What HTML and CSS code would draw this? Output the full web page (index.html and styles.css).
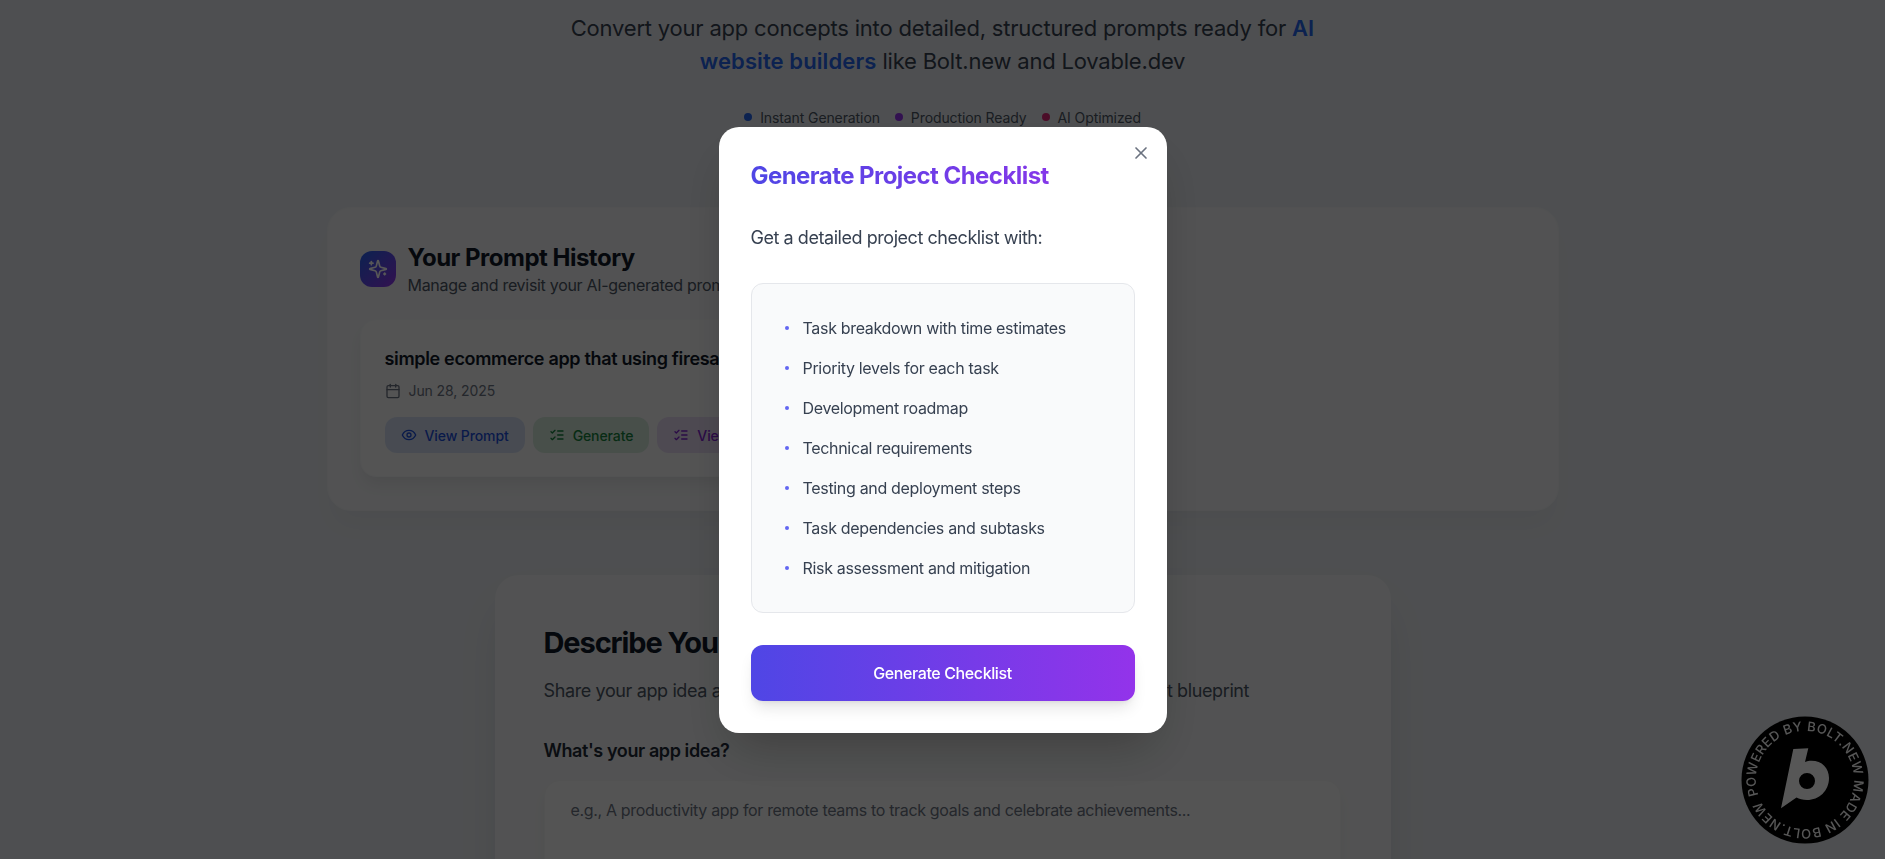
FILE: index.html
```html
<!DOCTYPE html>
<html lang="en">
<head>
<meta charset="utf-8">
<title>Generate Project Checklist</title>
<link rel="stylesheet" href="styles.css">
</head>
<body>
<main class="page">
  <p class="lead">Convert your app concepts into detailed, structured prompts ready for <strong>AI website builders</strong> like Bolt.new and Lovable.dev</p>
  <ul class="features">
    <li class="feature"><span class="dot dot-blue"></span>Instant Generation</li>
    <li class="feature"><span class="dot dot-purple"></span>Production Ready</li>
    <li class="feature"><span class="dot dot-pink"></span>AI Optimized</li>
  </ul>

  <section class="history">
    <header class="history-head">
      <span class="history-icon">
        <svg class="icon-20 mirrored" viewBox="0 0 24 24"><path d="M9.937 15.5A2 2 0 0 0 8.5 14.063l-6.135-1.582a.5.5 0 0 1 0-.962L8.5 9.936A2 2 0 0 0 9.937 8.5l1.582-6.135a.5.5 0 0 1 .963 0L14.063 8.5A2 2 0 0 0 15.5 9.937l6.135 1.581a.5.5 0 0 1 0 .964L15.5 14.063a2 2 0 0 0-1.437 1.437l-1.582 6.135a.5.5 0 0 1-.963 0z"/><path d="M20 3v4"/><path d="M22 5h-4"/><path d="M4 17v2"/><path d="M5 18H3"/></svg>
      </span>
      <div class="history-text">
        <h2 class="history-title">Your Prompt History</h2>
        <p class="history-sub">Manage and revisit your AI-generated prompts</p>
      </div>
    </header>
    <article class="item">
      <h3 class="item-title">simple ecommerce app that using firesa...</h3>
      <p class="item-date">
        <svg class="icon-16" viewBox="0 0 24 24"><path d="M8 2v4"/><path d="M16 2v4"/><rect x="3" y="4" width="18" height="18" rx="2"/><path d="M3 10h18"/></svg>
        Jun 28, 2025
      </p>
      <div class="item-actions">
        <button class="pill pill-blue"><svg class="icon-16" viewBox="0 0 24 24"><path d="M2 12s3-7 10-7 10 7 10 7-3 7-10 7-10-7-10-7Z"/><circle cx="12" cy="12" r="3"/></svg>View Prompt</button>
        <button class="pill pill-green"><svg class="icon-16" viewBox="0 0 24 24"><path d="m3 17 2 2 4-4"/><path d="m3 7 2 2 4-4"/><path d="M13 6h8"/><path d="M13 12h8"/><path d="M13 18h8"/></svg>Generate</button>
        <button class="pill pill-purple"><svg class="icon-16" viewBox="0 0 24 24"><path d="m3 17 2 2 4-4"/><path d="m3 7 2 2 4-4"/><path d="M13 6h8"/><path d="M13 12h8"/><path d="M13 18h8"/></svg>View</button>
      </div>
    </article>
  </section>

  <section class="describe">
    <h2 class="describe-title">Describe Your App Idea</h2>
    <p class="describe-sub">Share your app idea and we'll transform it into a comprehensive development blueprint</p>
    <label class="describe-label" for="idea">What's your app idea?</label>
    <textarea class="describe-input" id="idea" placeholder="e.g., A productivity app for remote teams to track goals and celebrate achievements..."></textarea>
  </section>
</main>

<a class="bolt" href="#" aria-label="Made in Bolt.new">
  <svg class="bolt-svg" viewBox="0 0 128 128">
    <circle cx="64" cy="64" r="63.5" class="bolt-disc"/>
    <path id="bolt-ring" class="bolt-ring" d="M17.3 79.2A49 49 0 1 1 110.7 48.8A49 49 0 1 1 17.3 79.2"/>
    <text class="bolt-text"><textPath href="#bolt-ring" textLength="302" lengthAdjust="spacing">POWERED BY BOLT.NEW MADE IN BOLT.NEW</textPath></text>
    <path class="bolt-b" fill-rule="evenodd" d="M52.3 33L67.3 32.3L64 46C66 45 68 44.7 70.5 44.7C81 44.7 88 52 88 62C88 75 78 84 66 84C62 84 58 83 55.5 81.5L40 92.3ZM66 57A8 8 0 1 0 66 73A8 8 0 1 0 66 57Z"/>
  </svg>
</a>

<div class="overlay">
  <div class="modal" role="dialog">
    <button class="close" aria-label="Close">
      <svg class="icon-20" viewBox="0 0 24 24"><path d="M18 6 6 18"/><path d="m6 6 12 12"/></svg>
    </button>
    <h2 class="modal-title"><span class="modal-title-text">Generate Project Checklist</span></h2>
    <p class="modal-intro">Get a detailed project checklist with:</p>
    <ul class="modal-list">
      <li class="modal-row">Task breakdown with time estimates</li>
      <li class="modal-row">Priority levels for each task</li>
      <li class="modal-row">Development roadmap</li>
      <li class="modal-row">Technical requirements</li>
      <li class="modal-row">Testing and deployment steps</li>
      <li class="modal-row">Task dependencies and subtasks</li>
      <li class="modal-row">Risk assessment and mitigation</li>
    </ul>
    <button class="modal-cta">Generate Checklist</button>
  </div>
</div>
</body>
</html>
```
FILE: styles.css
```css
* { box-sizing: border-box; }
html, body { margin: 0; height: 859px; overflow: hidden; }
body {
  font-family: Inter, "Liberation Sans", sans-serif;
  background: #e5e8ec;
  color: #111827;
}
h2, h3, p, ul { margin: 0; padding: 0; }
ul { list-style: none; }
button { font-family: inherit; border: 0; cursor: pointer; }

svg { fill: none; stroke: currentColor; stroke-width: 2; stroke-linecap: round; stroke-linejoin: round; flex: none; }
.icon-16 { width: 16px; height: 16px; }
.icon-20 { width: 20px; height: 20px; }
.mirrored { transform: scaleX(-1); }

.page { display: flex; flex-direction: column; align-items: center; padding-top: 12px; }

.lead { width: 768px; text-align: center; font-size: 22px; line-height: 32.5px; font-weight: 400; letter-spacing: -.2px; color: #374151; }
.lead strong { font-weight: 600; letter-spacing: .1px; color: #2563eb; }

.features { display: flex; gap: 15px; margin-top: 29px; height: 22px; align-items: center; font-size: 14px; letter-spacing: -.1px; color: #4b5563; }
.feature { display: flex; align-items: center; gap: 8px; }
.dot { width: 8px; height: 8px; border-radius: 50%; }
.dot-blue { background: #2563eb; }
.dot-purple { background: #9333ea; }
.dot-pink { background: #db2777; }

.history {
  width: 1232px; height: 304px; margin-top: 79px; padding: 32px;
  border-radius: 24px; background: #eff0f2;
  border: 1px solid #eceef0;
  box-shadow: 0 20px 25px -5px rgba(0,0,0,.03);
}
.history-head { display: flex; align-items: center; gap: 12px; }
.history-text { padding-top: 2px; }
.history-icon {
  width: 36px; height: 36px; border-radius: 12px; color: #fff;
  display: flex; align-items: center; justify-content: center;
  background: linear-gradient(135deg, #2563eb, #9333ea);
}
.history-title { font-size: 24px; line-height: 32px; font-weight: 700; letter-spacing: -.5px; color: #111827; }
.history-sub { font-size: 16px; line-height: 24px; margin-top: -1px; letter-spacing: -.3px; color: #4b5563; }

.item {
  width: 373px; height: 158px; margin-top: 22px; padding: 25px 24px 24px;
  background: #f5f6f7; border-radius: 16px; border: 1px solid #f1f2f3;
  box-shadow: 0 10px 15px -3px rgba(0,0,0,.07);
}
.item-title { font-size: 18px; line-height: 28px; font-weight: 600; letter-spacing: -.33px; color: #111827; white-space: nowrap; }
.item-date { display: flex; align-items: center; gap: 8px; margin-top: 7px; font-size: 14px; line-height: 22px; letter-spacing: -.1px; color: #6b7280; }
.item-actions { display: flex; gap: 8px; margin-top: 15px; }
.pill {
  display: flex; align-items: center; gap: 8px; height: 36px; padding: 0 16px;
  border-radius: 12px; font-size: 14px; font-weight: 500; letter-spacing: -.1px; white-space: nowrap;
}
.pill-blue { background: #d3ddf1; color: #1d4ed8; }
.pill-green { background: #d3e7d9; color: #15803d; }
.pill-purple { background: #e4d9f0; color: #7e22ce; }

.describe {
  width: 896px; height: 400px; margin-top: 64px; padding: 50px 48px 48px 49px;
  border-radius: 24px; background: #f0f1f2;
  box-shadow: 0 25px 50px -12px rgba(0,0,0,.12);
}
.describe-title { font-size: 29px; line-height: 36px; font-weight: 700; letter-spacing: -1.1px; color: #111827; }
.describe-sub { margin-top: 16px; font-size: 18px; line-height: 28px; letter-spacing: -.38px; color: #4b5563; white-space: nowrap; }
.describe-label { display: block; margin-top: 32px; font-size: 18px; line-height: 28px; font-weight: 600; letter-spacing: -.4px; color: #1f2937; }
.describe-input {
  display: block; width: 797px; height: 160px; margin-top: 15px; padding: 17px 26px;
  border: 1px solid #eff0f1; border-radius: 16px; background: #f6f7f7; resize: none;
  font: 400 16px/24px Inter, "Liberation Sans", sans-serif; letter-spacing: -.33px; outline: none;
  box-shadow: 0 10px 15px -3px rgba(0,0,0,.07);
}
.describe-input::placeholder { color: #6b7280; opacity: 1; }

.bolt { position: fixed; left: 1741px; top: 716px; width: 128px; height: 128px; display: block; }
.bolt-svg { width: 128px; height: 128px; display: block; }
.bolt-disc { fill: #000; stroke: none; }
.bolt-ring { fill: none; stroke: none; }
.bolt-text { fill: #fff; stroke: none; font: 500 13px Inter, "Liberation Sans", sans-serif; }
.bolt-b { fill: #fff; stroke: none; }

.overlay {
  position: fixed; inset: 0; display: flex; align-items: center; justify-content: center;
  background: rgba(0,0,0,.66);
  -webkit-backdrop-filter: blur(.6px);
  backdrop-filter: blur(.6px);
}
.modal {
  position: relative; width: 448px; height: 606px; margin-top: 1px; padding: 33px 32px 32px;
  background: #fff; border-radius: 20px;
  box-shadow: 0 25px 50px -12px rgba(0,0,0,.25);
}
.close {
  position: absolute; top: 16px; right: 16px; width: 20px; height: 20px; padding: 0;
  background: none; color: #6b7280; display: block;
}
.modal-title { font-size: 24px; line-height: 32px; font-weight: 700; letter-spacing: -.55px; }
.modal-title-text {
  background: linear-gradient(90deg, #4f46e5, #9333ea);
  -webkit-background-clip: text; background-clip: text;
  color: transparent;
  display: inline-block; width: 100%;
}
.modal-intro { margin-top: 32px; font-size: 18px; line-height: 28px; letter-spacing: -.45px; color: #374151; }
.modal-list {
  display: flex; flex-direction: column; gap: 16px; margin-top: 31px; height: 330px;
  padding: 32px 33px;
  background: #f9fafb; border: 1px solid #e5e7eb; border-radius: 12px;
}
.modal-row { display: flex; align-items: center; gap: 14px; font-size: 16px; line-height: 24px; letter-spacing: -.32px; color: #374151; }
.modal-row::before { content: ""; width: 4px; height: 4px; border-radius: 50%; background: #6366f1; flex: none; }
.modal-cta {
  display: block; width: 100%; height: 56px; margin-top: 32px;
  border-radius: 12px; color: #fff; font-size: 16px; font-weight: 500; letter-spacing: -.4px;
  background: linear-gradient(90deg, #4f46e5, #9333ea);
  box-shadow: 0 10px 15px -3px rgba(0,0,0,.1), 0 4px 6px -4px rgba(0,0,0,.1);
}
```
